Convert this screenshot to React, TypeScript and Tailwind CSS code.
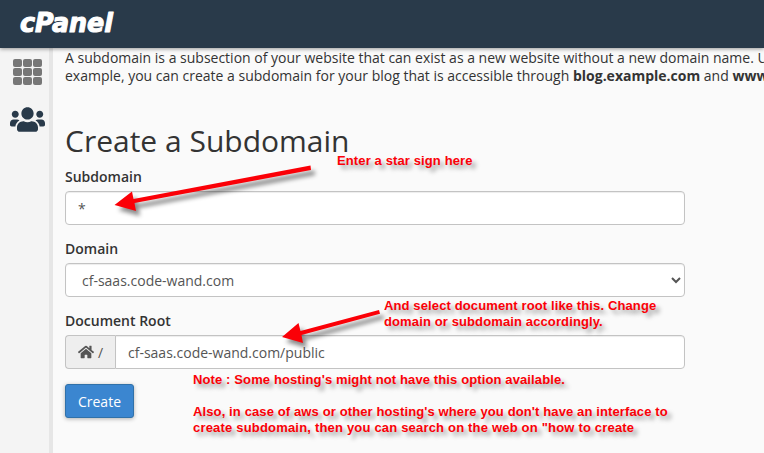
import { FaHome, FaUsers } from "react-icons/fa";

const field =
  "block h-[34px] w-full rounded-[4px] border border-[#c3c3c3] bg-white px-3 text-[14px] text-[#555] shadow-[inset_0_1px_1px_rgba(0,0,0,0.075)] outline-none";
const label = "mb-[5px] block h-[18px] text-[14px] font-semibold leading-[18px] text-[#333]";
const note =
  "absolute whitespace-pre font-['Liberation_Sans',Arial,sans-serif] text-[13px] tracking-[0.12px] font-bold leading-4 text-[#fb0007] [text-shadow:4px_4px_4px_rgba(0,0,0,0.35)]";

function Header() {
  return (
    <header className="relative z-10 flex h-12 items-center bg-[#293a4a] pl-5 shadow-[0_1px_4px_rgba(0,0,0,0.4)]">
      <svg width="104" height="32" viewBox="0 0 104 32" className="-mt-[3px] overflow-visible" role="img" aria-label="cPanel">
        <text
          x="0"
          y="25"
          fill="white"
          stroke="white"
          strokeWidth="1.1"
          strokeLinejoin="round"
          textLength="93"
          lengthAdjust="spacingAndGlyphs"
          fontFamily="'DejaVu Sans', sans-serif"
          fontSize="26"
          fontWeight="700"
          fontStyle="italic"
        >
          cPanel
        </text>
      </svg>
    </header>
  );
}

function Sidebar() {
  return (
    <nav className="w-[53px] shrink-0 border-r-4 border-[#e6e6e6] bg-[#f4f4f4] pl-[10px] pt-[11px]">
      <div className="ml-[3px] grid w-[29px] grid-cols-3 gap-px">
        {Array.from({ length: 9 }, (_, i) => (
          <span key={i} className="h-2 w-[9px] rounded-[2px] bg-[#777]" />
        ))}
      </div>
      <FaUsers size={35} className="mt-[17px] text-[#293a4a]" />
    </nav>
  );
}

function Annotations() {
  return (
    <div className="pointer-events-none absolute inset-0 z-20">
      <svg
        width="764"
        height="453"
        className="absolute inset-0 drop-shadow-[4px_5px_2px_rgba(0,0,0,0.45)]"
        fill="#fb0007"
      >
        <path d="M114.500 205L132 191.500L133.500 199L310.500 165.500L311 170L134.500 203L136 211Z" />
        <path d="M282 337L298.500 323L300.500 331L379 310L380 313.800L301.500 335L303 343Z" />
      </svg>
      <p className={`${note} left-[337px] top-[153px]`}>Enter a star sign here</p>
      <p className={`${note} left-[384px] top-[298px]`}>
        {"And select document root like this. Change\ndomain or subdomain accordingly."}
      </p>
      <p className={`${note} left-[193px] top-[372px]`}>
        {
          "Note : Some hosting's might not have this option available.\n\nAlso, in case of aws or other hosting's where you don't have an interface to\n"
        }
        <span className="tracking-[0.19px]">{'create subdomain, then you can search on the web on "how to create'}</span>
      </p>
    </div>
  );
}

export default function App() {
  return (
    <div className="relative flex h-[453px] w-[764px] flex-col overflow-hidden bg-[#fafafa] font-['Open_Sans',sans-serif] text-[14px] text-[#333]">
      <Header />
      <div className="flex min-h-0 flex-1">
        <Sidebar />
        <main className="min-w-0 flex-1 pl-3 pt-px">
          <p className="whitespace-pre text-[14px] leading-[18px]">
            A subdomain is a subsection of your website that can exist as a new website without a new domain name. Use
            {"\n"}example, you can create a subdomain for your blog that is accessible through <b>blog.example.com</b> and{" "}
            <b>www.example.com</b>
          </p>
          <h1 className="mt-[37px] h-[46px] whitespace-nowrap text-[30px] leading-[38px]">Create a Subdomain</h1>
          <form className="w-[620px]" onSubmit={(e) => e.preventDefault()}>
            <label className={label}>Subdomain</label>
            <input className={field} defaultValue="*" />
            <label className={`${label} mt-[15px]`}>Domain</label>
            <select className={field}>
              <option>cf-saas.code-wand.com</option>
            </select>
            <label className={`${label} mt-[15px]`}>Document Root</label>
            <div className="flex">
              <span className="flex h-[34px] w-[50px] shrink-0 items-center justify-center gap-1 rounded-l-[4px] border border-r-0 border-[#c3c3c3] bg-[#eee] text-[#555]">
                <FaHome size={16} />/
              </span>
              <input className={`${field} rounded-l-none`} defaultValue="cf-saas.code-wand.com/public" />
            </div>
            <button className="mt-[15px] h-[34px] w-[69px] rounded-[3px] border border-[#3071a9] bg-[#3b86d0] text-[14px] text-white shadow-[0_1px_4px_rgba(0,0,0,0.3)]">
              Create
            </button>
          </form>
        </main>
      </div>
      <Annotations />
    </div>
  );
}
